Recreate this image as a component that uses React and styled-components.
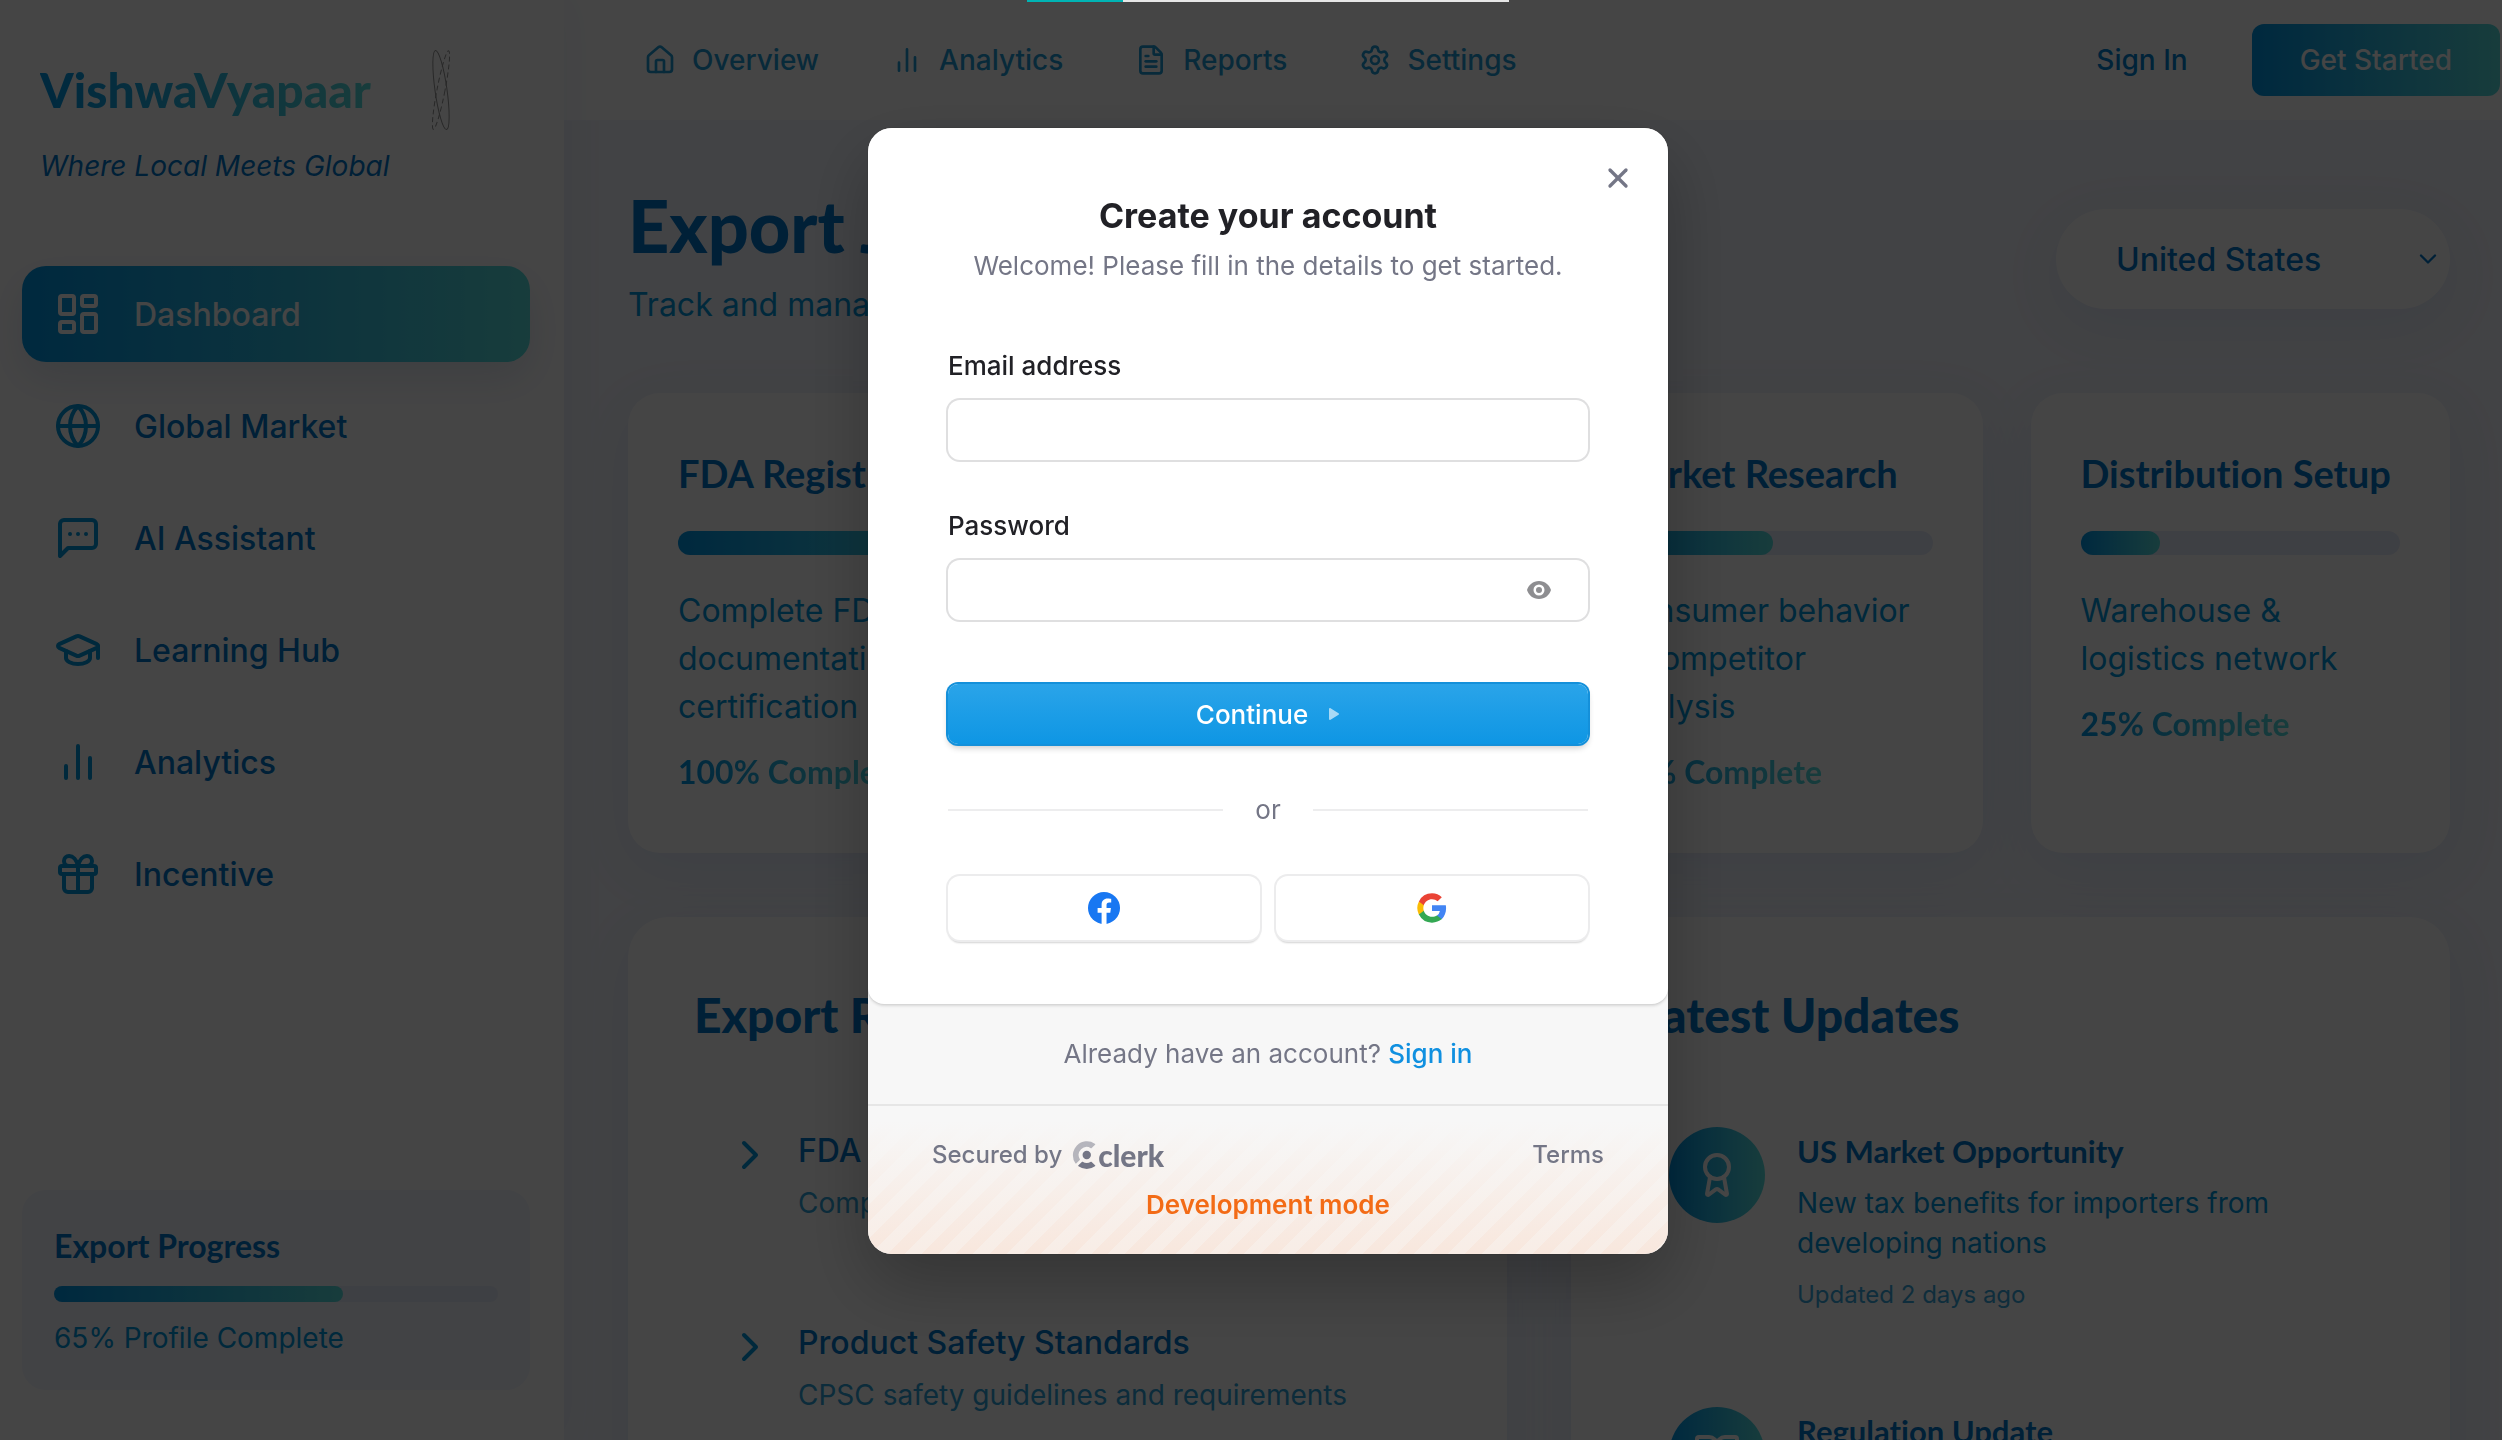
import React from "react";
import styled, { createGlobalStyle } from "styled-components";
import {
    Award,
    BookOpen,
    ChevronDown,
    ChevronRight,
    FileText,
    Gift,
    Globe,
    GraduationCap,
    House,
    LayoutDashboard,
    Settings,
    X,
} from "lucide-react";

const gradient = "linear-gradient(90deg, #0096e6, #58dede)";
const cardShadow = "0 16px 60px rgba(60, 90, 190, 0.09)";

const GlobalStyle = createGlobalStyle`
    * {
        box-sizing: border-box;
    }
    body {
        margin: 0;
        overflow: hidden;
        background: #f3f6fd;
        font-family: Inter, "Liberation Sans", sans-serif;
        font-variant-ligatures: none;
        -webkit-font-smoothing: antialiased;
    }
    h1, h2, h3, p, ul {
        margin: 0;
        padding: 0;
    }
    ul {
        list-style: none;
    }
    a {
        color: inherit;
        text-decoration: none;
    }
    button, input, select {
        font-family: inherit;
        border: none;
        padding: 0;
    }
    svg {
        flex-shrink: 0;
    }
`;

const Layout = styled.div`
    display: flex;
    height: 100vh;
    overflow: hidden;
`;

/* ---------- sidebar ---------- */

const Sidebar = styled.aside`
    display: flex;
    flex-direction: column;
    flex: 0 0 564px;
    padding: 48px 34px 50px 22px;
    background: #fff;
    box-shadow: 0 0 40px rgba(60, 90, 190, 0.08);
    z-index: 1;
`;

const BrandRow = styled.div`
    display: flex;
    align-items: center;
    gap: 54px;
    height: 84px;
    padding-left: 18px;
`;

const Brand = styled.span`
    font-family: Lato, sans-serif;
    font-size: 48px;
    line-height: 60px;
    font-weight: 900;
    color: transparent;
    background: ${gradient};
    background-clip: text;
`;

const Tagline = styled.p`
    margin: 14px 0 80px;
    padding-left: 18px;
    font-size: 28px;
    line-height: 40px;
    font-style: italic;
    color: #0077cc;
`;

const SideNav = styled.nav`
    display: flex;
    flex-direction: column;
    gap: 16px;
`;

const SideLink = styled.a`
    display: flex;
    align-items: center;
    gap: 32px;
    height: 96px;
    padding: 0 32px;
    border-radius: 24px;
    font-size: 32px;
    font-weight: 500;
    color: ${(p) => (p.$active ? "#fff" : "#0077cc")};
    background: ${(p) => (p.$active ? gradient : "none")};
    box-shadow: ${(p) => (p.$active ? "0 16px 40px rgba(0, 60, 130, 0.12)" : "none")};
    & svg {
        color: ${(p) => (p.$active ? "#fff" : "#0096dc")};
    }
`;

const ProgressCard = styled.section`
    margin-top: auto;
    padding: 32px;
    border-radius: 24px;
    background: #f3f6fd;
`;

const ProgressTitle = styled.h3`
    font-family: Lato, sans-serif;
    font-size: 32px;
    line-height: 48px;
    font-weight: 700;
    color: #0077cc;
`;

const ProgressText = styled.p`
    font-size: 28px;
    line-height: 40px;
    color: #0096dc;
`;

const Track = styled.div`
    height: ${(p) => (p.$slim ? "16px" : "24px")};
    margin: ${(p) => (p.$slim ? "16px 0" : "28px 0 32px")};
    border-radius: 12px;
    background: #e6ebfb;
`;

const Fill = styled.div`
    height: 100%;
    border-radius: 12px;
    background: ${gradient};
`;

/* ---------- top bar ---------- */

const Content = styled.div`
    display: flex;
    flex-direction: column;
    flex: 1;
    min-width: 0;
`;

const TopBar = styled.header`
    display: flex;
    flex-shrink: 0;
    align-items: center;
    justify-content: space-between;
    padding: 24px 2px 24px 80px;
    background: #fff;
    border-bottom: 1px solid #f4f7ff;
`;

const TopNav = styled.nav`
    display: flex;
    gap: 72px;
`;

const TopLink = styled.a`
    display: flex;
    align-items: center;
    gap: 16px;
    font-size: 28px;
    font-weight: 500;
    color: #1e9ad6;
`;

const Actions = styled.div`
    display: flex;
    align-items: center;
    gap: 64px;
`;

const SignInButton = styled.button`
    font-size: 28px;
    font-weight: 500;
    color: #0082d2;
    background: none;
`;

const StartButton = styled.button`
    height: 72px;
    padding: 0 48px;
    border-radius: 12px;
    font-size: 28px;
    font-weight: 500;
    color: #fff;
    background: ${gradient};
`;

/* ---------- main area ---------- */

const Main = styled.main`
    padding: 60px 52px 0 64px;
`;

const PageHead = styled.div`
    display: flex;
    align-items: center;
    justify-content: space-between;
    margin-bottom: 64px;
`;

const PageTitle = styled.h1`
    font-family: Lato, sans-serif;
    font-size: 72px;
    line-height: 88px;
    font-weight: 900;
    color: #0077cc;
`;

const PageText = styled.p`
    margin-top: 12px;
    font-size: 32px;
    line-height: 48px;
    color: #0096dc;
`;

const CountryPicker = styled.label`
    display: grid;
    align-items: center;
    width: 394px;
    height: 100px;
    margin-top: 8px;
    border-radius: 50px;
    background: #fff;
    box-shadow: ${cardShadow};
    color: #0077cc;
    & > * {
        grid-area: 1 / 1;
    }
    & svg {
        justify-self: end;
        margin-right: 8px;
        pointer-events: none;
    }
`;

const CountrySelect = styled.select`
    width: 100%;
    height: 100%;
    padding: 0 60px;
    appearance: none;
    font-size: 32px;
    font-weight: 500;
    color: inherit;
    background: none;
`;

const Stages = styled.div`
    display: grid;
    grid-template-columns: repeat(4, minmax(0, 1fr));
    gap: 48px;
    margin-bottom: 64px;
`;

const Stage = styled.section`
    padding: 50px 50px 56px;
    border-radius: 32px;
    background: #fff;
    box-shadow: ${cardShadow};
`;

const StageTitle = styled.h3`
    font-family: Lato, sans-serif;
    font-size: 38px;
    line-height: 60px;
    font-weight: 700;
    white-space: nowrap;
    color: #0077cc;
`;

const StageText = styled.p`
    font-size: 32px;
    line-height: 48px;
    color: #0096dc;
`;

const StageStatus = styled.p`
    width: fit-content;
    margin-top: 16px;
    font-family: Lato, sans-serif;
    font-size: 32px;
    line-height: 50px;
    font-weight: 700;
    color: transparent;
    background: ${gradient};
    background-clip: text;
`;

const Panels = styled.div`
    display: grid;
    grid-template-columns: repeat(2, minmax(0, 1fr));
    gap: 64px;
`;

const Panel = styled.section`
    padding: 66px;
    border-radius: 40px;
    background: #fff;
    box-shadow: ${cardShadow};
`;

const PanelTitle = styled.h2`
    margin-bottom: 48px;
    font-family: Lato, sans-serif;
    font-size: 48px;
    line-height: 64px;
    font-weight: 900;
    color: #0077cc;
`;

const List = styled.ul`
    display: flex;
    flex-direction: column;
    gap: 32px;
`;

const ListItem = styled.li`
    display: flex;
    align-items: flex-start;
    gap: ${(p) => p.$gap};
    padding: 32px;
    color: #0096dc;
`;

const ChevronBox = styled.span`
    display: flex;
    padding-top: 4px;
`;

const ItemTitle = styled.h3`
    margin-bottom: 8px;
    font-family: ${(p) => (p.$display ? "Lato, sans-serif" : "inherit")};
    font-size: ${(p) => (p.$display ? "31px" : "32px")};
    line-height: 48px;
    font-weight: ${(p) => (p.$display ? 700 : 500)};
    color: #0077cc;
`;

const ItemText = styled.p`
    font-size: 28px;
    line-height: 40px;
    color: ${(p) => (p.$faded ? "#2ea2d8" : "#0096dc")};
`;

const ItemDate = styled.p`
    margin-top: 16px;
    font-size: 24px;
    line-height: 32px;
    color: #38a8dc;
`;

const Badge = styled.span`
    display: flex;
    flex: 0 0 96px;
    align-items: center;
    justify-content: center;
    height: 96px;
    border-radius: 50%;
    color: #fff;
    background: ${gradient};
`;

/* ---------- sign-up modal ---------- */

const Overlay = styled.div`
    position: fixed;
    inset: 0;
    z-index: 10;
    display: flex;
    flex-direction: column;
    align-items: center;
    padding-left: 34px;
    background: rgba(0, 0, 0, 0.73);
`;

const LoadingBar = styled.div`
    flex-shrink: 0;
    width: 482px;
    height: 2px;
    margin-bottom: 126px;
    background: #e6e6e6;
`;

const LoadingFill = styled.div`
    height: 100%;
    background: #00b4b4;
`;

const Modal = styled.div`
    width: 800px;
    border-radius: 24px;
    overflow: hidden;
    background: #f7f7f7;
    box-shadow: 0 30px 70px rgba(0, 0, 0, 0.25), 0 0 0 1px rgba(0, 0, 0, 0.06);
`;

const FormCard = styled.form`
    display: flex;
    flex-direction: column;
    padding: 32px 80px 64px;
    border-radius: 0 0 16px 16px;
    background: #fff;
    box-shadow: 0 0 2px rgba(0, 0, 0, 0.1), 0 2px 3px rgba(0, 0, 0, 0.12);
`;

const CloseButton = styled.button`
    display: flex;
    align-self: flex-end;
    align-items: center;
    justify-content: center;
    width: 36px;
    height: 36px;
    margin-right: -48px;
    background: none;
    color: #747686;
`;

const ModalTitle = styled.h2`
    font-size: 34px;
    line-height: 40px;
    font-weight: 700;
    text-align: center;
    color: #212126;
`;

const ModalText = styled.p`
    margin: 12px 0 64px;
    font-size: 26px;
    line-height: 36px;
    text-align: center;
    color: #747686;
`;

const Field = styled.div`
    margin-bottom: 48px;
`;

const Label = styled.label`
    display: block;
    margin-bottom: 16px;
    font-size: 26px;
    line-height: 36px;
    font-weight: 500;
    color: #212126;
`;

const InputBox = styled.div`
    display: flex;
    align-items: center;
    height: 60px;
    padding: 0 36px 0 24px;
    border-radius: 12px;
    background: #fff;
    box-shadow: 0 0 0 2px #dfdfe0;
`;

const Input = styled.input`
    flex: 1;
    height: 100%;
    outline: none;
    font-size: 26px;
    background: none;
`;

const EyeButton = styled.button`
    display: flex;
    background: none;
    color: #8e8e91;
`;

const ContinueButton = styled.button`
    display: flex;
    align-items: center;
    justify-content: center;
    gap: 20px;
    height: 60px;
    margin-top: 16px;
    border-radius: 10px;
    font-size: 26px;
    font-weight: 500;
    color: #fff;
    background: linear-gradient(#2aa4e9, #0e96e4);
    box-shadow: 0 0 0 2px #1490da, 0 4px 6px rgba(0, 0, 0, 0.2);
`;

const Divider = styled.div`
    display: flex;
    align-items: center;
    gap: 32px;
    margin: 46px 0;
    font-size: 26px;
    line-height: 40px;
    color: #747686;
    &::before,
    &::after {
        content: "";
        flex: 1;
        height: 2px;
        background: #ededee;
    }
`;

const SocialRow = styled.div`
    display: grid;
    grid-template-columns: 1fr 1fr;
    gap: 16px;
`;

const SocialButton = styled.button`
    display: flex;
    align-items: center;
    justify-content: center;
    height: 64px;
    border-radius: 12px;
    background: #fff;
    box-shadow: 0 0 0 2px #ececed, 0 3px 2px rgba(0, 0, 0, 0.18);
`;

const SignInLine = styled.p`
    padding: 32px;
    font-size: 26px;
    line-height: 36px;
    text-align: center;
    color: #747686;
    & a {
        font-weight: 500;
        color: #1090e0;
    }
`;

const ClerkFooter = styled.footer`
    display: grid;
    padding: 30px 64px 26px;
    row-gap: 16px;
    height: 150px;
    border-top: 2px solid #e6e6e6;
    background:
        linear-gradient(#f7f7f7 10%, rgba(247, 247, 247, 0)),
        repeating-linear-gradient(-45deg, #f8ede6 0 12px, #f8e7dd 12px 24px);
`;

const FooterRow = styled.div`
    display: flex;
    align-items: center;
    justify-content: space-between;
    font-size: 24px;
    line-height: 30px;
    font-weight: 500;
    color: #747686;
`;

const SecuredBy = styled.span`
    display: flex;
    align-items: center;
    gap: 10px;
`;

const ClerkMark = styled.a`
    display: flex;
    align-items: center;
    gap: 2px;
    font-family: Lato, sans-serif;
    font-size: 30px;
    font-weight: 900;
`;

const DevMode = styled.p`
    font-size: 26px;
    line-height: 32px;
    font-weight: 600;
    text-align: center;
    color: #f36b16;
`;

/* ---------- icons ---------- */

const Stroke = ({ size, children }) => (
    <svg width={size} height={size} viewBox="0 0 24 24" fill="none" stroke="currentColor"
        strokeWidth="2" strokeLinecap="round" strokeLinejoin="round">
        {children}
    </svg>
);

const BarsIcon = ({ size }) => (
    <Stroke size={size}>
        <path d="M18 20V10M12 20V4M6 20v-6" />
    </Stroke>
);

const ChatIcon = ({ size }) => (
    <Stroke size={size}>
        <path d="M21 15a2 2 0 0 1-2 2H7l-4 4V5a2 2 0 0 1 2-2h14a2 2 0 0 1 2 2z" />
        <path d="M8 10h.01M12 10h.01M16 10h.01" />
    </Stroke>
);

const OrbitIcon = () => (
    <svg width="32" height="84" viewBox="0 0 32 84" fill="none" stroke="#666" strokeWidth="1" opacity="0.7">
        <ellipse cx="16" cy="42" rx="6" ry="40" transform="rotate(-8 16 42)" />
        <ellipse cx="16" cy="42" rx="4" ry="40" transform="rotate(11 16 42)" strokeDasharray="5 3" />
    </svg>
);

const EyeIcon = () => (
    <svg width="26" height="20" viewBox="0 0 26 20">
        <path fill="currentColor" fillRule="evenodd"
            d="M13 1C7 1 2.500 5 1 10c1.500 5 6 9 12 9s10.500-4 12-9c-1.500-5-6-9-12-9Zm0 3.500a5.500 5.500 0 1 1 0 11 5.500 5.500 0 0 1 0-11Z" />
        <circle cx="13" cy="10" r="3" fill="currentColor" />
    </svg>
);

const CaretIcon = () => (
    <svg width="12" height="14" viewBox="0 0 12 14">
        <path d="M2 2v10l8-5z" fill="#fff" stroke="#fff" strokeWidth="2" strokeLinejoin="round" opacity="0.62" />
    </svg>
);

const FacebookIcon = () => (
    <svg width="32" height="32" viewBox="0 0 24 24">
        <circle cx="12" cy="12" r="12" fill="#1877f2" />
        <path fill="#fff" d="M16.700 15.500 17.200 12h-3.300V9.800c0-1 .5-1.900 2-1.900h1.500V5s-1.400-.2-2.700-.2c-2.700 0-4.500 1.700-4.500 4.700V12h-3v3.500h3V24h3.700v-8.500z" />
    </svg>
);

const GoogleIcon = () => (
    <svg width="32" height="32" viewBox="0 0 24 24">
        <path fill="#4285f4" d="M22.560 12.250c0-.78-.07-1.530-.2-2.250H12v4.260h5.920a5.060 5.060 0 0 1-2.200 3.320v2.770h3.570c2.080-1.920 3.270-4.740 3.270-8.100z" />
        <path fill="#34a853" d="M12 23c2.970 0 5.460-.98 7.280-2.660l-3.570-2.770c-.98.66-2.230 1.060-3.710 1.060-2.860 0-5.290-1.930-6.160-4.530H2.180v2.840A11 11 0 0 0 12 23z" />
        <path fill="#fbbc05" d="M5.840 14.090a6.600 6.600 0 0 1 0-4.180V7.070H2.180a11 11 0 0 0 0 9.860z" />
        <path fill="#ea4335" d="M12 5.380c1.620 0 3.060.56 4.210 1.640l3.150-3.150C17.450 2.090 14.970 1 12 1A11 11 0 0 0 2.180 7.070l3.660 2.840C6.710 7.310 9.140 5.380 12 5.380z" />
    </svg>
);

const ClerkIcon = () => (
    <svg width="24" height="28" viewBox="2 0 20 24" fill="#747686">
        <path d="M21.470 3.170 18.590 6.050a.57.57 0 0 1-.7.084A6.850 6.850 0 0 0 8.470 15.550a.57.57 0 0 1-.084.7l-2.880 2.880a.57.57 0 0 1-.876-.07A12 12 0 0 1 21.230 2.300a.57.57 0 0 1 .24.870Z" opacity="0.5" />
        <circle cx="14.350" cy="12" r="3.600" />
        <path d="m21.470 20.830-2.880-2.880a.57.57 0 0 0-.7-.084 6.850 6.850 0 0 1-7.080 0 .57.57 0 0 0-.7.084l-2.880 2.880a.57.57 0 0 0 .063.876 12 12 0 0 0 14.113 0 .57.57 0 0 0 .067-.876Z" />
    </svg>
);

/* ---------- data ---------- */

const sideLinks = [
    { label: "Dashboard", icon: LayoutDashboard, active: true },
    { label: "Global Market", icon: Globe },
    { label: "AI Assistant", icon: ChatIcon },
    { label: "Learning Hub", icon: GraduationCap },
    { label: "Analytics", icon: BarsIcon },
    { label: "Incentive", icon: Gift },
];

const topLinks = [
    { label: "Overview", icon: House },
    { label: "Analytics", icon: BarsIcon },
    { label: "Reports", icon: FileText },
    { label: "Settings", icon: Settings },
];

const stages = [
    { title: "FDA Registration", percent: 100, text: "Complete FDA documentation and certification" },
    { title: "Product Testing", percent: 75, text: "Quality and safety compliance checks" },
    { title: "Market Research", percent: 50, text: "Consumer behavior & competitor analysis" },
    { title: "Distribution Setup", percent: 25, text: "Warehouse & logistics network" },
];

const requirements = [
    { title: "FDA Compliance", text: "Complete FDA registration process" },
    { title: "Product Safety Standards", text: "CPSC safety guidelines and requirements" },
];

const updates = [
    {
        title: "US Market Opportunity",
        text: "New tax benefits for importers from developing nations",
        date: "Updated 2 days ago",
        icon: Award,
    },
    {
        title: "Regulation Update",
        text: "Revised labelling rules for consumer goods",
        date: "Updated 5 days ago",
        icon: BookOpen,
    },
];

const ProgressBar = ({ value, slim }) => (
    <Track $slim={slim}>
        <Fill style={{ width: `${value}%` }} />
    </Track>
);

const SidebarArea = () => (
    <Sidebar>
        <BrandRow>
            <Brand>VishwaVyapaar</Brand>
            <OrbitIcon />
        </BrandRow>
        <Tagline>Where Local Meets Global</Tagline>
        <SideNav>
            {sideLinks.map(({ label, icon: Icon, active }) => (
                <SideLink key={label} href="#" $active={active}>
                    <Icon size={48} />
                    {label}
                </SideLink>
            ))}
        </SideNav>
        <ProgressCard>
            <ProgressTitle>Export Progress</ProgressTitle>
            <ProgressBar value={65} slim />
            <ProgressText>65% Profile Complete</ProgressText>
        </ProgressCard>
    </Sidebar>
);

const Dashboard = () => (
    <Main>
        <PageHead>
            <div>
                <PageTitle>Export Journey</PageTitle>
                <PageText>Track and manage your export process</PageText>
            </div>
            <CountryPicker>
                <CountrySelect aria-label="Country">
                    <option>United States</option>
                </CountrySelect>
                <ChevronDown size={28} />
            </CountryPicker>
        </PageHead>
        <Stages>
            {stages.map((stage) => (
                <Stage key={stage.title}>
                    <StageTitle>{stage.title}</StageTitle>
                    <ProgressBar value={stage.percent} />
                    <StageText>{stage.text}</StageText>
                    <StageStatus>{stage.percent}% Complete</StageStatus>
                </Stage>
            ))}
        </Stages>
        <Panels>
            <Panel>
                <PanelTitle>Export Requirements</PanelTitle>
                <List>
                    {requirements.map((item) => (
                        <ListItem key={item.title} $gap="24px">
                            <ChevronBox><ChevronRight size={48} /></ChevronBox>
                            <div>
                                <ItemTitle>{item.title}</ItemTitle>
                                <ItemText $faded>{item.text}</ItemText>
                            </div>
                        </ListItem>
                    ))}
                </List>
            </Panel>
            <Panel>
                <PanelTitle>Latest Updates</PanelTitle>
                <List>
                    {updates.map(({ title, text, date, icon: Icon }) => (
                        <ListItem key={title} $gap="32px">
                            <Badge><Icon size={48} /></Badge>
                            <div>
                                <ItemTitle $display>{title}</ItemTitle>
                                <ItemText>{text}</ItemText>
                                <ItemDate>{date}</ItemDate>
                            </div>
                        </ListItem>
                    ))}
                </List>
            </Panel>
        </Panels>
    </Main>
);

const SignUpModal = () => (
    <Overlay>
        <LoadingBar>
            <LoadingFill style={{ width: "20%" }} />
        </LoadingBar>
        <Modal role="dialog" aria-labelledby="signup-title">
            <FormCard>
                <CloseButton type="button" aria-label="Close">
                    <X size={32} strokeWidth={2.5} />
                </CloseButton>
                <ModalTitle id="signup-title">Create your account</ModalTitle>
                <ModalText>Welcome! Please fill in the details to get started.</ModalText>
                <Field>
                    <Label htmlFor="email">Email address</Label>
                    <InputBox>
                        <Input id="email" type="email" />
                    </InputBox>
                </Field>
                <Field>
                    <Label htmlFor="password">Password</Label>
                    <InputBox>
                        <Input id="password" type="password" />
                        <EyeButton type="button" aria-label="Show password"><EyeIcon /></EyeButton>
                    </InputBox>
                </Field>
                <ContinueButton type="button">
                    Continue
                    <CaretIcon />
                </ContinueButton>
                <Divider>or</Divider>
                <SocialRow>
                    <SocialButton type="button" aria-label="Facebook"><FacebookIcon /></SocialButton>
                    <SocialButton type="button" aria-label="Google"><GoogleIcon /></SocialButton>
                </SocialRow>
            </FormCard>
            <SignInLine>Already have an account? <a href="#">Sign in</a></SignInLine>
            <ClerkFooter>
                <FooterRow>
                    <SecuredBy>
                        Secured by
                        <ClerkMark href="#"><ClerkIcon />clerk</ClerkMark>
                    </SecuredBy>
                    <a href="#">Terms</a>
                </FooterRow>
                <DevMode>Development mode</DevMode>
            </ClerkFooter>
        </Modal>
    </Overlay>
);

const App = () => {
    return (
    <>
        <GlobalStyle />
        <Layout>
            <SidebarArea />
            <Content>
                <TopBar>
                    <TopNav>
                        {topLinks.map(({ label, icon: Icon }) => (
                            <TopLink key={label} href="#">
                                <Icon size={32} />
                                {label}
                            </TopLink>
                        ))}
                    </TopNav>
                    <Actions>
                        <SignInButton>Sign In</SignInButton>
                        <StartButton>Get Started</StartButton>
                    </Actions>
                </TopBar>
                <Dashboard />
            </Content>
        </Layout>
        <SignUpModal />
    </>
    );
};

export default App;
